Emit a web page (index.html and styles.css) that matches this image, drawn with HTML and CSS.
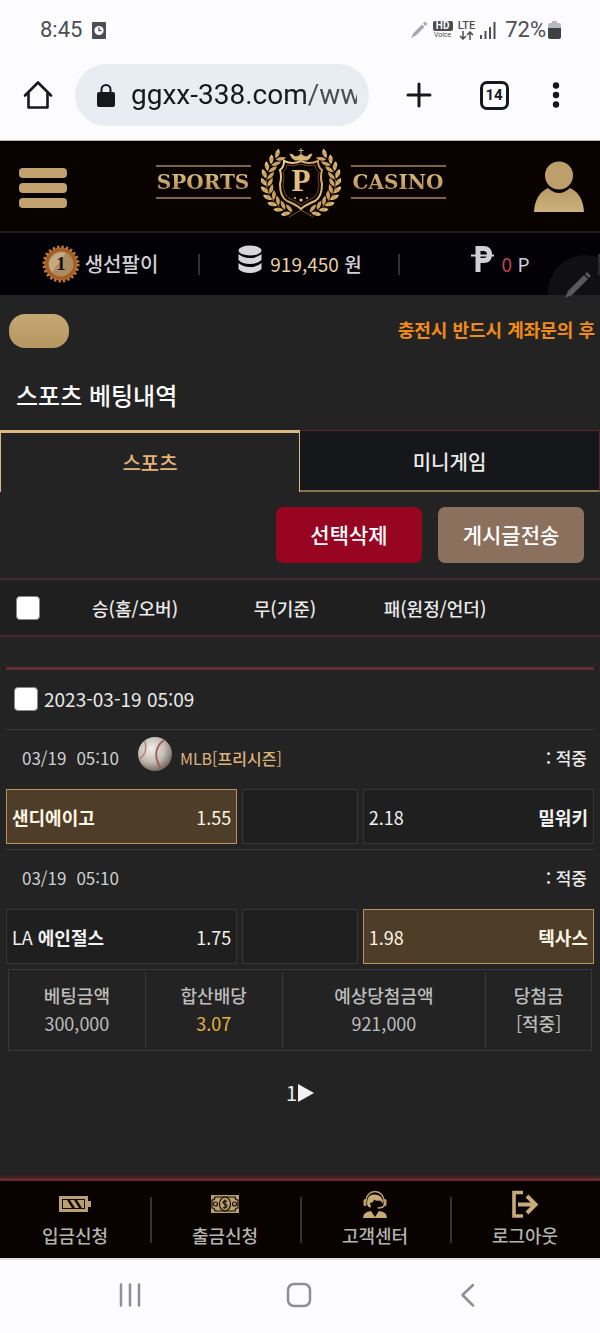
FILE: index.html
```html
<!DOCTYPE html>
<html lang="ko">
<head>
<meta charset="utf-8">
<meta name="viewport" content="width=device-width, initial-scale=1">
<title>스포츠 베팅내역</title>
<link rel="stylesheet" href="styles.css">
</head>
<body>
<div class="status">
  <div class="status-group">
    <span class="status-text">8:45</span>
    <svg class="status-clock" width="14" height="17" viewBox="0 0 14 17"><rect width="14" height="17" rx="1" fill="#4c4d50"/><circle cx="7" cy="8.500" r="4.600" fill="#fcfcfe"/><path d="M7 5.500v3.200h2.500" fill="none" stroke="#4c4d50" stroke-width="1.300"/></svg>
  </div>
  <div class="status-group status-right">
    <svg width="18" height="18" viewBox="0 0 18 18" fill="#a9a9ab"><path d="M1 17l2.500-5L12 3.500 14.500 6 6 14.500zM13 2.500l2-2 2.500 2.500-2 2z"/></svg>
    <div class="hd"><b>HD</b><span>Voice</span></div>
    <div class="lte"><span>LTE</span><svg width="15" height="9" viewBox="0 0 15 9" fill="none" stroke="#4c4d50" stroke-width="1.500"><path d="M4 0v8M1 5l3 3 3-3M11 9V1M8 4l3-3 3 3"/></svg></div>
    <svg class="signal" width="17" height="17" viewBox="0 0 17 17" fill="#4c4d50"><path d="M0 13h2v4H0zM4.500 9h2v8h-2zM9 5h2v12H9zM13.500 0h2v17h-2z"/></svg>
    <span class="status-text">72%</span>
    <svg class="battery" width="13" height="18" viewBox="0 0 13 18"><path d="M4 0h5v2h2q2 0 2 2v4H0V4q0-2 2-2h2z" fill="#b9b9bb"/><path d="M0 7h13v9q0 2-2 2H2q-2 0-2-2z" fill="#3f4043"/></svg>
  </div>
</div>
<div class="browser">
  <button class="plain" aria-label="홈"><svg width="30" height="30" viewBox="0 0 30 30" fill="none" stroke="#17181b" stroke-width="2.600" stroke-linejoin="round" stroke-linecap="round"><path d="M2 15.500L15 2.500l13 13M5.500 13v14.500h19V13"/></svg></button>
  <div class="address">
    <svg width="18" height="23" viewBox="0 0 18 23"><rect y="8" width="18" height="15" rx="2" fill="#17181b"/><path d="M4.500 9V5.500a4.500 4.500 0 0 1 9 0V9" fill="none" stroke="#17181b" stroke-width="2"/></svg>
    <input class="url" type="text" value="ggxx-338.com/www" aria-label="주소">
  </div>
  <button class="plain" aria-label="새 탭"><svg width="26" height="26" viewBox="0 0 26 26" stroke="#17181b" stroke-width="3" stroke-linecap="round"><path d="M13 2v22M2 13h22"/></svg></button>
  <button class="plain" aria-label="탭 14개"><span class="tabcount">14</span></button>
  <button class="plain" aria-label="더보기"><svg width="8" height="26" viewBox="0 0 8 26" fill="#17181b"><circle cx="4" cy="3.500" r="3.200"/><circle cx="4" cy="13" r="3.200"/><circle cx="4" cy="22.500" r="3.200"/></svg></button>
</div>

<header class="site-head">
  <button class="plain menu" aria-label="메뉴"><span></span><span></span><span></span></button>
  <a class="logo" href="#" aria-label="SPORTS CASINO">
    <span class="logo-word">SPORTS</span>
    <svg class="crest" width="80" height="72" viewBox="0 0 80 72">
      <defs>
        <linearGradient id="gold" x1="0" y1="0" x2="1" y2="1"><stop offset="0" stop-color="#f2dc9c"/><stop offset=".5" stop-color="#c79a55"/><stop offset="1" stop-color="#ecd08a"/></linearGradient>
        <g id="leaf" fill="url(#gold)"><path d="M5 38Q-1.500 35 0 29Q6.500 31 5 38z"/><path d="M6 39Q6 33 12 30Q12.500 37 6 39z"/></g>
        <g id="branch">
          <use href="#leaf" transform="rotate(-70 40 36)"/><use href="#leaf" transform="rotate(-57 40 36)"/><use href="#leaf" transform="rotate(-44 40 36)"/><use href="#leaf" transform="rotate(-31 40 36)"/><use href="#leaf" transform="rotate(-18 40 36)"/><use href="#leaf" transform="rotate(-5 40 36)"/><use href="#leaf" transform="rotate(8 40 36)"/><use href="#leaf" transform="rotate(21 40 36)"/><use href="#leaf" transform="rotate(34 40 36)"/><use href="#leaf" transform="rotate(47 40 36)"/>
          <path d="M19 63Q4 52 5.500 34" fill="none" stroke="#a87b3c" stroke-width=".8"/>
        </g>
      </defs>
      <g transform="translate(0 0) scale(1 .95)"><use href="#branch"/><use href="#branch" transform="translate(80 0) scale(-1 1)"/></g>
      <path d="M23 14Q32 18 40 14Q48 18 57 14Q57 20 61 23Q59 30 61 37Q61 50 54 54Q44 58 40 62Q36 58 26 54Q19 50 19 37Q21 30 19 23Q23 20 23 14z" fill="#080300" stroke="url(#gold)" stroke-width="2"/>
      <path d="M26 18Q33 20 40 17Q47 20 54 18Q54 22 58 25Q56 31 58 38Q57 48 52 51Q43 55 40 58Q37 55 28 51Q23 48 22 38Q24 31 22 25Q26 22 26 18z" fill="none" stroke="#74421f" stroke-width="1"/>
      <path d="M40 1v10M37.500 3.500h5M29 7q3 0 5 3 3 0 5-2h2q2 2 5 2 2-3 5-3-2 5-5 6H34q-3-1-5-6z" fill="#d9b876" stroke="#d9b876" stroke-width="1"/>
      <circle cx="34" cy="51" r="1" fill="#e7cd8a"/><circle cx="40" cy="53" r="1.600" fill="#e7cd8a"/><circle cx="46" cy="51" r="1" fill="#e7cd8a"/>
      <path d="M28 70l12-7 12 7" fill="none" stroke="#7b5a30" stroke-width="1"/>
      <text x="40" y="44" text-anchor="middle" class="crest-letter" fill="#dfbd7c">P</text>
    </svg>
    <span class="logo-word">CASINO</span>
  </a>
  <button class="plain" aria-label="내 정보"><svg width="50" height="51" viewBox="0 0 50 51"><defs><linearGradient id="tan" x1="0" y1="0" x2="0" y2="1"><stop offset="0" stop-color="#b89965"/><stop offset="1" stop-color="#cdb27d"/></linearGradient></defs><circle cx="25" cy="14.500" r="14" fill="#bd9f6b"/><path d="M0 51Q1 33 14 27Q25 37 36 27Q49 33 50 51z" fill="url(#tan)"/></svg></button>
</header>

<section class="userbar">
  <div class="user-cell">
    <svg width="38" height="38" viewBox="0 0 38 38"><circle cx="19" cy="19" r="16.500" fill="#a25e22"/><circle cx="19" cy="19" r="17" fill="none" stroke="#bd7b3c" stroke-width="3" stroke-dasharray="2.300 2.150"/><circle cx="19" cy="19" r="12.500" fill="#ad8b62"/><path d="M8 14Q16 5 24 8L10 27Q5 20 8 14z" fill="#c4aa82"/><text x="19" y="25" text-anchor="middle" class="badge-text">1</text></svg>
    <span>생선팔이</span>
  </div>
  <div class="user-cell">
    <svg class="raised" width="24" height="29" viewBox="0 0 24 29" fill="#d6d6dc"><ellipse cx="12" cy="5.500" rx="11.500" ry="5"/><path d="M.5 9Q5 13 12 13T23.500 9v6Q20 19 12 19T.5 15z"/><path d="M.5 18Q5 22 12 22T23.500 18v6Q20 28 12 28T.5 24z"/></svg>
    <span class="amount"><span class="money">919,450</span> <b>원</b></span>
  </div>
  <div class="user-cell">
    <svg class="raised" width="23" height="26" viewBox="0 0 23 26" fill="none" stroke="#d0d0d6"><path d="M7 26V2.500h5.500q6 0 6 6t-6 6H7" stroke-width="5"/><path d="M0 9.500h23" stroke-width="2"/></svg>
    <span class="amount"><span class="point">0</span> P</span>
  </div>
  <div class="pen-float"><svg width="28" height="28" viewBox="0 0 28 28" fill="#59595b"><path d="M1 27l3-7L20 4l4 4L8 24zM21 3l2-2 4 4-2 2z"/></svg></div>
</section>

<main class="content">
  <div class="notice"><button class="pill" aria-label="공지"></button><span>충전시 반드시 계좌문의 후</span></div>
  <h1 class="title">스포츠 베팅내역</h1>
  <nav class="tabs"><a class="tab tab-on" href="#">스포츠</a><a class="tab" href="#">미니게임</a></nav>
  <div class="actions"><button class="btn btn-red">선택삭제</button><button class="btn btn-tan">게시글전송</button></div>
  <div class="columns">
    <input class="check" type="checkbox" aria-label="전체 선택">
    <span>승(홈/오버)</span><span>무(기준)</span><span>패(원정/언더)</span>
  </div>
  <section class="slip">
    <label class="slip-date"><input class="check" type="checkbox"><span>2023-03-19 05:09</span></label>
    <div class="match">
      <div class="match-info">
        <span class="when"><span>03/19</span><span>05:10</span></span>
        <svg class="ball" width="36" height="36" viewBox="0 0 36 36"><defs><radialGradient id="ball" cx=".4" cy=".35" r=".65"><stop offset="0" stop-color="#f2eeea"/><stop offset=".6" stop-color="#c3bbb3"/><stop offset="1" stop-color="#756d66"/></radialGradient></defs><circle cx="18" cy="18" r="17" fill="url(#ball)"/><path d="M2 23Q11 18 8 5" fill="none" stroke="#b98878" stroke-width="1.500"/><path d="M27 4Q13 15 24 33" fill="none" stroke="#9c5f52" stroke-width="1.800"/></svg>
        <span class="league">MLB[<b>프리시즌</b>]</span>
        <span class="result">: <b>적중</b></span>
      </div>
      <div class="odds">
        <button class="odd odd-on"><b>샌디에이고</b><span>1.55</span></button>
        <button class="odd" aria-label="무"></button>
        <button class="odd"><span>2.18</span><b>밀워키</b></button>
      </div>
    </div>
    <div class="match">
      <div class="match-info">
        <span class="when"><span>03/19</span><span>05:10</span></span>
        <span class="result">: <b>적중</b></span>
      </div>
      <div class="odds">
        <button class="odd"><span>LA <b>에인절스</b></span><span>1.75</span></button>
        <button class="odd" aria-label="무"></button>
        <button class="odd odd-on"><span>1.98</span><b>텍사스</b></button>
      </div>
    </div>
    <table class="summary">
      <colgroup><col class="c-bet"><col class="c-bet"><col class="c-expect"><col class="c-win"></colgroup>
      <thead><tr><th>베팅금액</th><th>합산배당</th><th>예상당첨금액</th><th>당첨금</th></tr></thead>
      <tbody><tr><td>300,000</td><td class="total">3.07</td><td>921,000</td><td>[<b>적중</b>]</td></tr></tbody>
    </table>
  </section>
  <nav class="pages"><a href="#">1</a><a href="#" aria-label="다음"><svg width="16" height="18" viewBox="0 0 16 18"><path d="M0 0l16 9-16 9z" fill="#f2f2f2"/></svg></a></nav>
</main>

<nav class="bottom">
  <a href="#"><svg width="32" height="28" viewBox="0 0 32 28"><path d="M0 6h29v5h3v6h-3v5H0z" fill="#baa071"/><path d="M3 9h23v10H3z" fill="#120b02"/><path d="M4 10h4l5 8H4zM11 10h4l5 8h-4zM18 10h7v8h-2z" fill="#baa071"/></svg><span>입금신청</span></a>
  <a href="#"><svg width="28" height="28" viewBox="0 0 28 28"><rect y="5" width="28" height="18" fill="#baa071"/><g fill="none" stroke="#171006" stroke-width="1.200"><path d="M4 7h20q0 3 3 3v8q-3 0-3 3H4q0-3-3-3v-8q3 0 3-3z"/><ellipse cx="14" cy="14" rx="5.500" ry="7"/><circle cx="4.500" cy="14" r="2"/><circle cx="23.500" cy="14" r="2"/><path d="M16 11.500q-2-1.500-3.500 0t1.500 2.500 1.500 3-3.500.5M14 9.500v9"/></g></svg><span>출금신청</span></a>
  <a href="#"><svg width="26" height="28" viewBox="0 0 26 28"><path d="M4 11a9 9.500 0 0 1 18 0" fill="none" stroke="#baa071" stroke-width="1.500"/><path d="M5 13Q5 4 13 4.500t8 9l-3-3q-4 1-6-1-1 4-4 3l1 5q-4 0-4-4.500z" fill="#c8ac77"/><rect x="1.500" y="9" width="3" height="7" rx="1.500" fill="#baa071"/><rect x="21.500" y="9" width="3" height="7" rx="1.500" fill="#baa071"/><path d="M22.500 15q-1 3-7 3" fill="none" stroke="#baa071" stroke-width="1.500"/><path d="M1 28q0-6 8-7l4 6 4-6q8 1 8 7z" fill="#c8ac77"/></svg><span>고객센터</span></a>
  <a href="#"><svg width="28" height="28" viewBox="0 0 28 28" fill="none" stroke="#c8ac77" stroke-width="3.600"><path d="M12 2.500H3v23.500h9"/><path d="M7 14.500h17M16 6l8.500 8.500L16 23" stroke-width="4"/></svg><span>로그아웃</span></a>
</nav>
<div class="system">
  <button class="plain" aria-label="최근 앱"><svg width="24" height="26" viewBox="0 0 24 26" stroke="#8f8f93" stroke-width="2.500" stroke-linecap="round"><path d="M3 2.500v21M12 2.500v21M21 2.500v21"/></svg></button>
  <button class="plain" aria-label="홈"><svg width="28" height="28" viewBox="0 0 28 28"><rect x="3" y="3" width="22" height="22" rx="6" fill="none" stroke="#8f8f93" stroke-width="2.500"/></svg></button>
  <button class="plain" aria-label="뒤로"><svg width="16" height="26" viewBox="0 0 16 26" fill="none" stroke="#8f8f93" stroke-width="2.500" stroke-linecap="round" stroke-linejoin="round"><path d="M13 3L2.500 13 13 23.500"/></svg></button>
</div>
</body>
</html>
```
FILE: styles.css
```css
* { box-sizing: border-box; }
body {
  margin: 0;
  min-height: 100vh;
  display: flex;
  flex-direction: column;
  background: #232323;
  color: #eaeaea;
  font: 400 18px/28px "Noto Sans CJK KR", "Noto Sans", sans-serif;
}
a { color: inherit; text-decoration: none; }
button, input { font: inherit; color: inherit; }
button { cursor: pointer; }
svg { display: block; flex: none; }
b, th { font-weight: 700; }
.plain {
  display: flex;
  align-items: center;
  justify-content: center;
  padding: 0;
  border: 0;
  background: none;
}

/* phone status bar */
.status {
  display: flex;
  justify-content: space-between;
  padding: 14px 39px 0 40px;
  height: 50px;
  background: #fcfcfe;
  color: #4c4d50;
  font-family: Roboto, sans-serif;
}
.status-group { display: flex; align-items: center; height: 32px; gap: 10px; }
.status-text { font-size: 22px; }
.status-right { gap: 5px; }
.signal { margin-right: 3px; }
.battery { margin-left: -3px; }
.hd { display: grid; width: 20px; text-align: center; }
.hd b { background: #4c4d50; color: #fcfcfe; border-radius: 2px; font-size: 10px; line-height: 10px; }
.hd span { font-size: 7px; line-height: 8px; }
.lte { display: grid; justify-items: center; font-size: 11px; line-height: 10px; font-weight: 500; }

/* browser toolbar */
.browser {
  display: grid;
  grid-template-columns: 75px 1fr 100px 50px 74px;
  padding: 14px 7px 14px 0;
  background: #fcfcfe;
  border-bottom: 1px solid #aeb2b0;
}
.address {
  display: flex;
  align-items: center;
  gap: 16px;
  height: 62px;
  padding: 0 12px 0 22px;
  border-radius: 31px;
  background: #e8edf3;
  min-width: 0;
}
.url {
  flex: 1;
  min-width: 0;
  padding: 0;
  border: 0;
  outline: 0;
  background: none;
  color: #17181b;
  font-family: Roboto, sans-serif;
  font-size: 28px;
  line-height: 40px;
  mask-image: linear-gradient(to right, #000 76%, rgba(0, 0, 0, .75) 80%);
}
.tabcount {
  width: 29px;
  border: 3px solid #17181b;
  border-radius: 7px;
  color: #17181b;
  font: 700 15px/23px Roboto, sans-serif;
}

/* site header */
.site-head {
  display: grid;
  grid-template-columns: 48px 1fr 50px;
  align-items: center;
  padding: 0 16px 0 19px;
  height: 92px;
  background: #080300;
  border-bottom: 2px solid #211d18;
}
.menu { flex-direction: column; gap: 5px; padding-top: 4px; }
.menu span { width: 48px; height: 10px; border-radius: 4px; background: #bfa26e; }
.logo { display: flex; justify-content: center; align-items: flex-start; gap: 10px; height: 78px; }
.logo-word {
  width: 95px;
  margin-top: 18px;
  border: solid #806540;
  border-width: 2px 0;
  background: linear-gradient(#e9cb8b, #a87d44) text;
  color: transparent;
  font: 700 20px/30px "DejaVu Serif", serif;
  text-align: center;
}
.crest-letter { font: 700 31px "Liberation Serif", serif; }

/* account bar */
.userbar {
  position: relative;
  display: grid;
  grid-template-columns: repeat(3, 1fr);
  height: 62px;
  background: #010106;
  color: #d0d0d6;
  font-size: 20px;
}
.user-cell { display: flex; align-items: center; justify-content: center; gap: 5px; position: relative; }
.user-cell::after { content: ""; position: absolute; right: 0; top: 21px; width: 2px; height: 21px; background: #303035; }
.user-cell:first-child, .user-cell b { font-weight: 500; }
.amount { font-size: 19px; }
.raised { margin: 0 3px 10px 0; }
.money { color: #e8cda6; }
.point { color: #c5434d; }
.badge-text { font: 700 19px "Liberation Serif", serif; fill: #191008; }
.pen-float {
  position: absolute;
  right: -22px;
  bottom: -34px;
  width: 74px;
  height: 74px;
  padding: 16px;
  border-radius: 50%;
  background: rgba(35, 35, 35, .45);
  clip-path: inset(0 22px 0 0);
}

/* bet history */
.content { flex: 1; }
.notice {
  position: relative;
  display: flex;
  justify-content: space-between;
  align-items: center;
  padding: 19px 5px 0 9px;
  color: #f28b16;
  font-weight: 700;
}
.pill { width: 60px; height: 34px; border: 0; border-radius: 16px; background: linear-gradient(#c5a873, #b59661); }
.notice span { padding-bottom: 4px; }
.title { margin: 0; padding: 29px 16px 17px; font-size: 24px; line-height: 36px; font-weight: 500; color: #fafafa; }
.tabs { display: grid; grid-template-columns: 1fr 1fr; font-size: 20px; font-weight: 500; text-align: center; }
.tab {
  height: 62px;
  padding-top: 1px;
  border: 1px solid #5b2629;
  border-bottom: 2px solid #887250;
  border-left: 0;
  background: #16171b;
  line-height: 60px;
}
.tab-on { border: 1px solid #dcb682; border-top-width: 3px; border-bottom: 0; padding: 0; background: none; color: #e5b479; }
.actions { display: flex; justify-content: flex-end; gap: 16px; padding: 15px 16px; }
.btn { width: 146px; height: 56px; padding: 0 0 3px; border: 0; border-radius: 7px; color: #fff; font-size: 21px; font-weight: 500; }
.btn-red { background: #970521; }
.btn-tan { background: #8c705e; }
.columns {
  display: grid;
  grid-template-columns: 60px 5fr 5fr 5fr 3fr;
  align-items: center;
  height: 59px;
  border: solid #46292c;
  border-width: 2px 0;
  background: #1f1f1f;
  text-align: center;
  font-weight: 500;
}
.check {
  appearance: none;
  width: 24px;
  height: 24px;
  margin: 0;
  border: 1px solid #8a8a8a;
  border-radius: 4px;
  background: #fff;
}
.columns .check { margin-left: 16px; }
.slip { margin: 30px 6px 0; border-top: 3px solid #642c32; }
.slip-date { display: flex; align-items: center; gap: 6px; height: 59px; padding: 0 0 2px 8px; font-size: 19px; }
.match { border-top: 1px solid #3a3a3a; padding-bottom: 5px; }
.match-info { display: flex; align-items: center; height: 59px; padding: 0 7px 4px 16px; font-size: 17px; }
.when { display: flex; gap: 10px; color: #cfcfcf; }
.ball { margin: -7px 7px 0 18px; }
.league { font-size: 16px; color: #dfb27c; }
.league b, .result b { font-weight: 500; }
.result { margin-left: auto; font-weight: 500; }
.odds { display: grid; grid-template-columns: 2fr 1fr 2fr; gap: 5px; }
.odd {
  display: flex;
  justify-content: space-between;
  align-items: center;
  height: 55px;
  padding: 0 5px;
  border: 1px solid #363636;
  background: #1f1f1f;
  color: #f2f2f2;
}
.odd-on { border-color: #b8935f; background: #4e3e29; color: #fff6e4; }
.summary {
  width: calc(100% - 4px);
  margin: 0 2px;
  padding: 2px 0;
  table-layout: fixed;
  border: 1px solid #383838;
  border-spacing: 0;
  text-align: center;
  color: #bdbdbd;
}
.c-bet { width: 47%; }
.c-bet, .c-bet + .c-bet { width: 23.5%; }
.c-expect { width: 35%; }
.c-win { width: 18%; }
.summary th, .summary td { padding: 0; border-right: 1px solid #3a3a3a; }
.summary th:last-child, .summary td:last-child { border-right: 0; }
.summary th { padding-top: 9px; font-weight: 500; }
.summary td { padding-bottom: 11px; }
.summary td b { font-weight: 500; }
.summary .total { color: #e3b43c; }
.pages { display: flex; justify-content: center; align-items: center; gap: 1px; padding-top: 28px; font-size: 20px; }

/* site bottom menu */
.bottom {
  display: grid;
  grid-template-columns: repeat(4, 1fr);
  height: 80px;
  border-top: 3px solid #662a2a;
  background: #080300;
  box-shadow: 0 -2px 3px #482323;
  color: #b5b3b0;
  font-weight: 500;
}
.bottom a { position: relative; display: flex; flex-direction: column; align-items: center; padding-top: 9px; gap: 3px; }
.bottom a + a::before { content: ""; position: absolute; left: 0; top: 16px; width: 2px; height: 46px; background: #35322f; }
.system {
  display: grid;
  grid-template-columns: repeat(3, 1fr);
  height: 75px;
  padding: 0 48px 3px 46px;
  border-top: 2px solid #dfe1e2;
  background: #fcfcfe;
}
```
